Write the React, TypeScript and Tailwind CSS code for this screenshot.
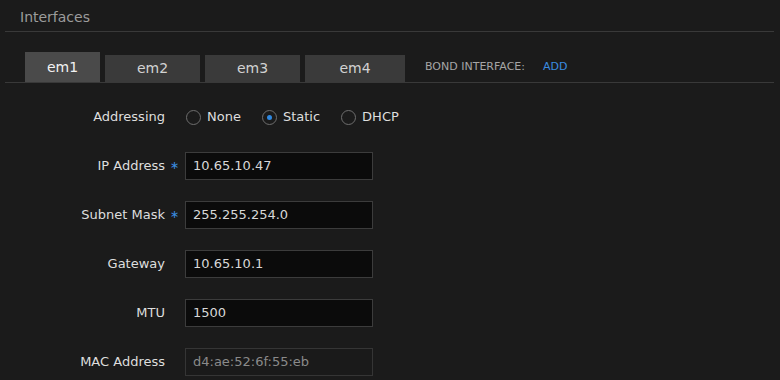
const tabs = [
  { name: "em1", active: true, width: "w-[75px]" },
  { name: "em2", active: false, width: "w-[95px]" },
  { name: "em3", active: false, width: "w-[95px]" },
  { name: "em4", active: false, width: "w-[100px]" },
];

const fields = [
  { label: "IP Address", value: "10.65.10.47", required: true },
  { label: "Subnet Mask", value: "255.255.254.0", required: true },
  { label: "Gateway", value: "10.65.10.1", required: false },
  { label: "MTU", value: "1500", required: false },
  { label: "MAC Address", value: "d4:ae:52:6f:55:eb", required: false, disabled: true },
];

function Radio({ label, checked }: { label: string; checked?: boolean }) {
  return (
    <label className="mr-[21px] flex items-center">
      <span className="flex h-[15px] w-[15px] items-center justify-center rounded-full border-[1.5px] border-[#6e6e6e]">
        {checked && <span className="h-[5px] w-[5px] rounded-full bg-[#2f88e0]" />}
      </span>
      <span className="ml-[6px] text-[13px] text-[#dedede]">{label}</span>
    </label>
  );
}

export default function App() {
  return (
    <div className="h-[380px] w-[780px] overflow-hidden bg-[#1b1b1b] font-['DejaVu_Sans',sans-serif]">
      <div className="ml-[5px] w-[769px]">
        <div className="h-[32px] border-b border-[#393939] pl-[15px] pt-[9px] text-[14px] leading-[16px] text-[#9c9c9c]">
          Interfaces
        </div>

        <div className="flex items-end border-b border-[#393939] pl-[20px] pt-[20px]">
          {tabs.map((t) => (
            <div
              key={t.name}
              className={
                t.active
                  ? `mr-[5px] flex h-[30px] ${t.width} items-center justify-center bg-[#4a4a4a] text-[14px] text-[#f2f2f2]`
                  : `mr-[5px] flex h-[27px] ${t.width} items-center justify-center bg-[#3a3a3a] text-[14px] text-[#d2d2d2]`
              }
            >
              {t.name}
            </div>
          ))}
          <div className="ml-[15px] flex h-[30px] items-center pt-px text-[11px]">
            <span className="text-[#a6a6a6]">BOND INTERFACE:</span>
            <span className="ml-[18px] text-[#3a8ce0]">ADD</span>
          </div>
        </div>
      </div>

      <div className="flex flex-col gap-[21px] pt-[20px]">
        <div className="flex h-[28px] items-center">
          <div className="w-[165px] text-right text-[13px] text-[#dedede]">Addressing</div>
          <div className="ml-[21px] flex items-center">
            <Radio label="None" />
            <Radio label="Static" checked />
            <Radio label="DHCP" />
          </div>
        </div>

        {fields.map((f) => (
          <div key={f.label} className="flex h-[28px] items-center">
            <div className="w-[165px] text-right text-[13px] text-[#dedede]">{f.label}</div>
            <div className="w-[20px] pl-[5px] text-[11px] text-[#3a8ce0]">{f.required ? "∗" : ""}</div>
            <div
              className={
                f.disabled
                  ? "flex h-[28px] w-[188px] items-center border border-[#353535] bg-[#1a1a1a] pl-[7px] text-[13px] text-[#8a8a8a]"
                  : "flex h-[28px] w-[188px] items-center border border-[#3c3c3c] bg-[#0b0b0b] pl-[7px] text-[13px] text-[#d8d8d8]"
              }
            >
              {f.value}
            </div>
          </div>
        ))}
      </div>
    </div>
  );
}
